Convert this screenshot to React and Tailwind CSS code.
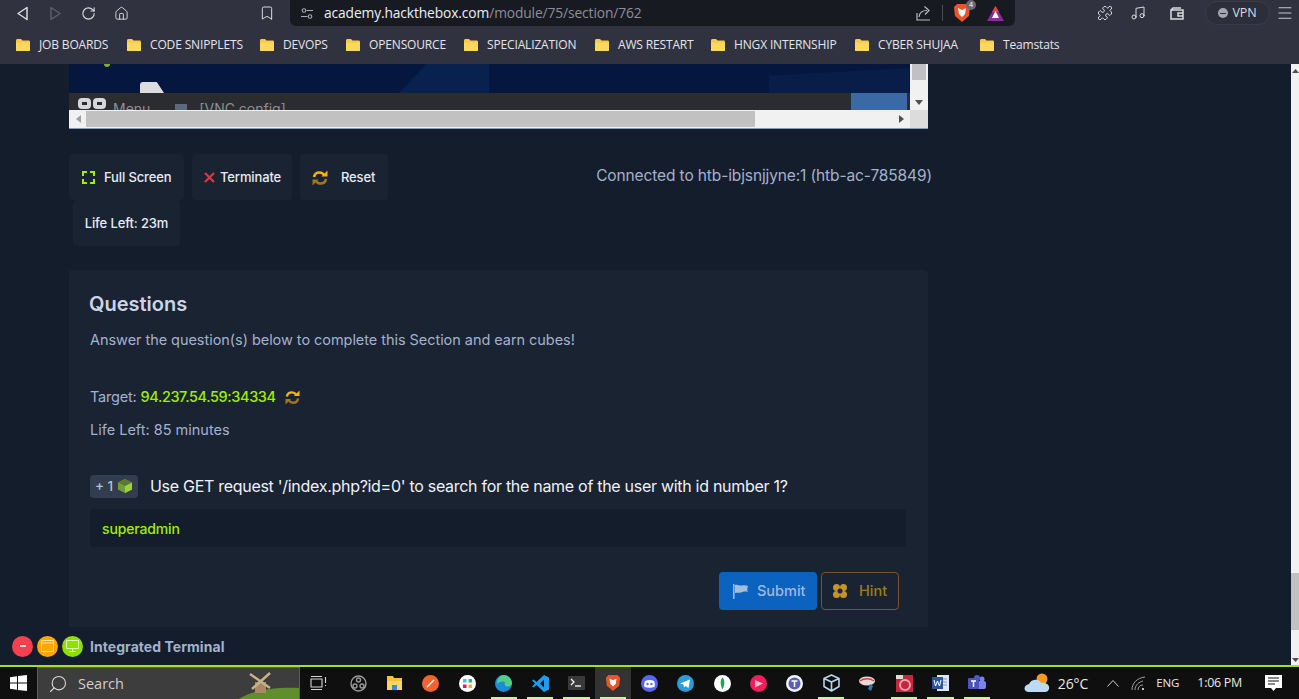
import React from "react";
import { RotateCw, Home, Bookmark, Puzzle, Music, Menu, Search } from "lucide-react";

const ui = "font-['Open_Sans','Noto_Sans',sans-serif]";
const inter = "font-['Inter',sans-serif]";

function Folder() {
  return (
    <svg width="16" height="14" viewBox="0 0 16 14" className="shrink-0">
      <path d="M1 2.5C1 1.7 1.6 1 2.4 1H6l1.5 1.6h6.2c.8 0 1.3.6 1.3 1.3v8c0 .7-.6 1.1-1.3 1.1H2.3C1.6 13 1 12.500 1 11.900z" fill="#f7c945" />
      <path d="M1 4.500h14v7.400c0 .6-.6 1.100-1.300 1.100H2.300C1.600 13 1 12.500 1 11.900z" fill="#fcd85e" />
    </svg>
  );
}

const marks = [
  ["JOB BOARDS", "w-[71px]", "mr-[16px]"],
  ["CODE SNIPPLETS", "w-[93px]", "mr-[16px]"],
  ["DEVOPS", "w-[46px]", "mr-[16px]"],
  ["OPENSOURCE", "w-[78px]", "mr-[16px]"],
  ["SPECIALIZATION", "w-[90px]", "mr-[17px]"],
  ["AWS RESTART", "w-[75px]", "mr-[17px]"],
  ["HNGX INTERNSHIP", "w-[103px]", "mr-[17px]"],
  ["CYBER SHUJAA", "w-[84px]", "mr-[17px]"],
  ["Teamstats", "w-[60px]", ""],
];

function BrowserChrome() {
  return (
    <div className={`${ui} bg-[#30323f] text-[#e4e5ea]`}>
      <div className="h-[26px] flex items-center relative">
        <div className="w-[290px] flex items-center h-full pl-[16px] shrink-0">
          <svg width="13" height="15" viewBox="0 0 13 15" fill="none" stroke="#d9dae0" strokeWidth="1.500"><path d="M11 1.500 2 7.500l9 6z" strokeLinejoin="round" /></svg>
          <svg width="13" height="15" viewBox="0 0 13 15" fill="none" stroke="#5c5e6b" strokeWidth="1.500" className="ml-[20px]"><path d="M2 1.500l9 6-9 6z" strokeLinejoin="round" /></svg>
          <RotateCw size={15} strokeWidth={1.800} color="#d9dae0" className="ml-[19px]" />
          <Home size={15} strokeWidth={1.500} color="#d9dae0" className="ml-[18px]" />
          <Bookmark size={16} strokeWidth={1.500} color="#d9dae0" className="ml-[130px]" />
        </div>
        <div className="w-[725px] h-[26px] bg-[#181a21] rounded-b-[6px] flex items-center pl-[11px] pr-[11px] shrink-0">
          <svg width="12" height="13" viewBox="0 0 12 13" fill="none" stroke="#a9abb5" strokeWidth="1.100"><circle cx="3" cy="3.500" r="1.800" /><path d="M5.500 3.500H12M0 9.500h6.500" /><circle cx="9" cy="9.500" r="1.800" /></svg>
          <span className="ml-[11px] text-[13.800px] leading-none tracking-[-0.120px] text-[#eeeff3]">academy.hackthebox.com</span>
          <span className="text-[13.800px] leading-none tracking-[-0.120px] text-[#8c8e9a]">/module/75/section/762</span>
          <div className="ml-auto flex items-center">
            <svg width="16" height="16" viewBox="0 0 16 16" fill="none" stroke="#b9bbc4" strokeWidth="1.200"><path d="M1 8v7h13M3 12c.5-5 4-6.500 8-6.500M8.500 1.500 13 5.500l-4 4" /></svg>
            <div className="w-px h-[16px] bg-[#4a4c58] ml-[10px]" />
            <div className="relative ml-[10px] mr-[16px]">
              <svg width="18" height="20" viewBox="0 0 18 20"><path d="M4 1h10l3 3-1 9-7 6-7-6-1-9z" fill="#e8552a" /><path d="M5 5l4 2 4-2-1 6-3 3-3-3z" fill="#fff" /></svg>
              <span className="absolute -top-[3px] -right-[5px] w-[10px] h-[10px] rounded-full bg-[#646a7c] text-[7px] leading-[10px] text-center text-white">4</span>
            </div>
            <svg width="17" height="15" viewBox="0 0 17 15"><path d="M8.500 0 17 15H0z" fill="#8a2a9c" /><path d="M8.500 0 12 6H5z" fill="#e8462c" /><path d="M8.500 5 12 12H5z" fill="#fff" /></svg>
          </div>
        </div>
        <div className="flex-1 flex items-center pl-[82px]">
          <Puzzle size={16} strokeWidth={1.500} color="#d9dae0" />
          <Music size={16} strokeWidth={1.500} color="#d9dae0" className="ml-[17px]" />
          <svg width="14" height="13" viewBox="0 0 14 13" fill="none" stroke="#d9dae0" strokeWidth="1.500" className="ml-[24px]"><path d="M1 3h12v9H1zM1 3l2-2h8M8 6h5v3H8z" /></svg>
          <div className="ml-[21px] h-[24px] w-[65px] rounded-full border border-[#3a3c4a] bg-[#2c2e3a] flex items-center justify-center gap-[4px]">
            <span className="w-[10px] h-[10px] rounded-full bg-[#a3a5af] flex items-center justify-center"><span className="w-[6px] h-px bg-[#30323f]" /></span>
            <span className="text-[12.500px] tracking-[-0.100px] text-[#d9dae0]">VPN</span>
          </div>
          <Menu size={18} strokeWidth={1.400} color="#c6c7d0" className="ml-[6px]" />
        </div>
      </div>
      <div className="h-[38px] flex items-center pl-[15px] pb-[1px]">
        {marks.map(([t, w, m]) => (
          <div key={t} className={`flex items-center ${m}`}>
            <Folder />
            <span className={`ml-[8px] text-[12px] tracking-[-0.150px] whitespace-nowrap ${w}`}>{t}</span>
          </div>
        ))}
      </div>
    </div>
  );
}

function Vnc() {
  return (
    <div className="w-[859px] h-[65px] flex flex-col border-b border-[#7f9db9] bg-white shrink-0">
      <div className="flex h-[46px]">
        <div className="flex-1 flex flex-col overflow-hidden">
          <div className="h-[29px] bg-[#05163f] relative overflow-hidden">
            <span className="absolute left-[35px] -top-[3px] w-[6px] h-[6px] rounded-full bg-[#7fb030]" />
            <span className="absolute left-[71px] top-[18px] w-[24px] h-[11px] bg-[#dcdcdc] rounded-tl-[3px] [clip-path:polygon(0_0,70%_0,100%_100%,0_100%)]" />
            <span className="absolute left-[330px] top-0 w-[90px] h-[29px] bg-[#08214f] [clip-path:polygon(30%_0,100%_0,100%_100%,0_100%)]" />
            <span className="absolute left-[700px] top-[4px] w-[140px] h-[25px] bg-[#081d47] [clip-path:polygon(0_30%,100%_0,100%_100%,0_100%)]" />
          </div>
          <div className="h-[17px] bg-[#2a2c30] flex overflow-hidden relative">
            <div className="flex gap-[2px] ml-[9px] mt-[5px]">
              <span className="w-[13px] h-[11px] rounded-[4px] border-[4px] border-[#d5d7dc]" />
              <span className="w-[13px] h-[11px] rounded-[4px] border-[4px] border-[#d5d7dc]" />
            </div>
            <span className={`${inter} ml-[7px] mt-[8px] text-[14px] leading-[16px] text-[#8d8f93]`}>Menu</span>
            <span className="ml-[25px] mt-[11px] w-[12px] h-[9px] bg-[#5a6a7c]" />
            <span className={`${inter} ml-[12px] mt-[8px] text-[14px] leading-[16px] text-[#8d8f93]`}>[VNC config]</span>
            <span className="absolute right-[3px] top-0 w-[56px] h-[17px] bg-[#3a69a6]" />
          </div>
        </div>
        <div className="w-[18px] bg-[#f1f1f1] flex flex-col items-center">
          <div className="w-[14px] h-[16px] bg-[#c1c1c1]" />
          <svg width="8" height="5" viewBox="0 0 8 5" className="mt-[20px]"><path d="M0 0h8L4 5z" fill="#505050" /></svg>
        </div>
      </div>
      <div className="flex-1 flex bg-[#f1f1f1] items-center">
        <svg width="5" height="8" viewBox="0 0 5 8" className="ml-[7px]"><path d="M5 0v8L0 4z" fill="#a0a0a0" /></svg>
        <div className="ml-[5px] w-[669px] h-[16px] bg-[#c1c1c1]" />
        <svg width="5" height="8" viewBox="0 0 5 8" className="ml-[144px]"><path d="M0 0v8l5-4z" fill="#505050" /></svg>
        <div className="ml-auto w-[18px] h-full bg-[#dcdcdc]" />
      </div>
    </div>
  );
}

function Swap({ size = 16 }) {
  return (
    <svg width={size} height={size} viewBox="0 0 16 16" fill="none" strokeWidth="2.600">
      <path d="M2 7c.5-3 3-4.500 5.500-4.500 2 0 3.500 1 4.500 2.500" stroke="#f7b500" />
      <path d="M9.500 6.500h6V.5z" fill="#f7b500" />
      <path d="M14 9c-.5 3-3 4.500-5.500 4.500-2 0-3.500-1-4.500-2.500" stroke="#a07620" />
      <path d="M6.500 9.500H.5v6z" fill="#a07620" />
    </svg>
  );
}

function Btn({ className, children }) {
  return <div className={`h-[46px] bg-[#1a2332] rounded-[4px] flex items-center pt-[1px] text-[13px] font-medium tracking-[-0.130px] text-[#e8ebf2] ${className}`}>{children}</div>;
}

function Controls() {
  return (
    <div className={`${inter} w-[863px] mt-[25px]`}>
      <div className="flex items-center">
        <Btn className="w-[115px] pl-[13px]">
          <svg width="13" height="13" viewBox="0 0 13 13" fill="none" stroke="#9fef00" strokeWidth="2"><path d="M1 5V1h4M8 1h4v4M12 8v4H8M5 12H1V8" /></svg>
          <span className="ml-[9px]">Full Screen</span>
        </Btn>
        <Btn className="w-[100px] ml-[8px] pl-[12px]">
          <svg width="11" height="11" viewBox="0 0 11 11" stroke="#e0353f" strokeWidth="2.200"><path d="M1 1l9 9M10 1l-9 9" /></svg>
          <span className="ml-[5px]">Terminate</span>
        </Btn>
        <Btn className="w-[88px] ml-[8px] pl-[12px]">
          <Swap />
          <span className="ml-[13px]">Reset</span>
        </Btn>
        <span className="ml-auto text-[15.500px] text-[#a4b1cd] mb-[3px] tracking-[-0.120px]">Connected to htb-ibjsnjjyne:1 (htb-ac-785849)</span>
      </div>
      <Btn className="w-[107px] ml-[4px] justify-center">Life Left: 23m</Btn>
    </div>
  );
}

function Card() {
  return (
    <div className={`${inter} w-[859px] mt-[24px] bg-[#1a2332] pt-[22px] pl-[21px] pr-[22px] rounded-t-[4px] h-[400px] shrink-0`}>
      <h2 className="text-[20px] leading-[24px] font-semibold -ml-[1px] text-[#cdd5e4]">Questions</h2>
      <p className="mt-[13px] text-[14.500px] leading-[22px] tracking-[-0.050px] text-[#a4b1cd]">Answer the question(s) below to complete this Section and earn cubes!</p>
      <div className="mt-[35px] flex items-center text-[14.500px] leading-[22px] text-[#a4b1cd]">
        <span className="tracking-[-0.200px]">Target:</span>
        <span className="ml-[4px] font-medium tracking-[-0.400px] text-[#9fef00]">94.237.54.59:34334</span>
        <span className="ml-[9px]"><Swap size={15} /></span>
      </div>
      <p className="mt-[11px] text-[14.500px] leading-[22px] text-[#a4b1cd]">Life Left: 85 minutes</p>
      <div className="mt-[33px] flex items-center">
        <div className="w-[48px] h-[23px] rounded-[4px] bg-[#323e50] flex items-center pl-[5px] text-[13.500px] font-medium text-[#b8c2d4]">
          <span>+ 1</span>
          <svg width="16" height="16" viewBox="0 0 16 16" className="ml-[4px]"><path d="M8 1l7 3.500v7L8 15l-7-3.500v-7z" fill="#6f9d3a" /><path d="M8 8l7-3.500v7L8 15z" fill="#9fd13a" /><path d="M1 4.500 8 1l7 3.500L8 8z" fill="#587a35" /></svg>
        </div>
        <span className="ml-[12px] text-[16px] leading-[24px] tracking-[-0.290px] text-[#eef1f6]">Use GET request '/index.php?id=0' to search for the name of the user with id number 1?</span>
      </div>
      <div className="mt-[11px] h-[38px] rounded-[4px] bg-[#141d2b] flex items-center pl-[12px] text-[14px] font-medium tracking-[-0.150px] text-[#9fef00]">superadmin</div>
      <div className="mt-[25px] flex justify-end pr-[7px] gap-[4px]">
        <div className="w-[98px] h-[38px] rounded-[4px] bg-[#0b63bf] flex items-center pl-[13px] text-[14.500px] font-medium text-[#9fb8dc]">
          <svg width="17" height="15" viewBox="0 0 17 15"><path d="M1 0h1.500v15H1z" fill="#a5bddc" /><path d="M3 1c3-1 4 1 7 .500 2-.3 4-.5 6 .5-1 3-1 4 0 6-3-1-5 0-7 .500-2 .3-4 0-6 .500z" fill="#a5bddc" /></svg>
          <span className="ml-[8px]">Submit</span>
        </div>
        <div className="w-[78px] h-[38px] rounded-[4px] border border-[#6e5a28] flex items-center pl-[11px] text-[14.500px] font-medium text-[#a07a1e]">
          <svg width="14" height="14" viewBox="0 0 14 14"><circle cx="3.500" cy="3.500" r="3.500" fill="#c3962a" /><circle cx="10.500" cy="3.500" r="3.500" fill="#c3962a" /><circle cx="3.500" cy="10.500" r="3.500" fill="#c3962a" /><circle cx="10.500" cy="10.500" r="3.500" fill="#c3962a" /><circle cx="7" cy="7" r="2.500" fill="#2b2142" /></svg>
          <span className="ml-[12px]">Hint</span>
        </div>
      </div>
    </div>
  );
}

function Terminal() {
  return (
    <div className={`${inter} h-[38px] bg-[#141d2b] flex items-center pl-[12px] shrink-0`}>
      <span className="w-[21px] h-[21px] rounded-full bg-[#f5414f] flex items-center justify-center"><span className="w-[6px] h-[2px] bg-[#ffd8dc]" /></span>
      <span className="ml-[4px] w-[21px] h-[21px] rounded-full bg-[#ffa600] flex items-center justify-center">
        <svg width="13" height="12" viewBox="0 0 13 12" fill="none" stroke="#ffe2a0" strokeWidth="1"><path d="M.5.500h12v11H.5zM.500 3h12" /></svg>
      </span>
      <span className="ml-[4px] w-[21px] h-[21px] rounded-full bg-[#8fe000] flex items-center justify-center">
        <svg width="13" height="12" viewBox="0 0 13 12" fill="none" stroke="#e3f8b8" strokeWidth="1"><path d="M.5.500h12v8H.5zM6.500 8.500v3M3.500 11.500h6" /></svg>
      </span>
      <span className="ml-[7px] text-[14px] font-bold text-[#a4b1cd] tracking-[0.050px]">Integrated Terminal</span>
    </div>
  );
}

const dot = (bg, inner) => (
  <svg width="17" height="17" viewBox="0 0 17 17"><circle cx="8.500" cy="8.500" r="8.500" fill={bg} />{inner}</svg>
);

const icons = [
  [<svg width="17" height="17" viewBox="0 0 17 17" fill="none" stroke="#9a9a9a" strokeWidth="1.400"><circle cx="8.500" cy="8.500" r="7.500" /><circle cx="8.500" cy="5" r="2" /><circle cx="5" cy="11" r="2" /><circle cx="12" cy="11" r="2" /></svg>, 0],
  [<svg width="17" height="16" viewBox="0 0 17 16"><path d="M1 1h6l1 2h8v4H1z" fill="#f5c33b" /><path d="M1 6h15v9H1z" fill="#fbd85d" /><path d="M6 10h5v5H6z" fill="#2f8fdc" /></svg>, 0],
  [dot("#f4622d", <path d="M5 12 12 5" stroke="#fff" strokeWidth="1.500" />), 0],
  [dot("#ffffff", <><rect x="4" y="4" width="3.500" height="3.500" fill="#36c5f0" /><rect x="9.500" y="4" width="3.500" height="3.500" fill="#2eb67d" /><rect x="4" y="9.500" width="3.500" height="3.500" fill="#e01e5a" /><rect x="9.500" y="9.500" width="3.500" height="3.500" fill="#ecb22e" /></>), 0],
  [<svg width="17" height="17" viewBox="0 0 17 17"><circle cx="8.500" cy="8.500" r="8.500" fill="#1a8cd8" /><path d="M8.500 0C13 0 17 3.500 17 8.500c0 2-2 3-4 3-3 0-4-2-3-4C9 6 5 6 2 9 2 4 5 0 8.500 0z" fill="#4fd08a" /></svg>, 1],
  [<svg width="17" height="17" viewBox="0 0 17 17"><path d="M12 0l5 2.500v12L12 17 4.500 10 1.500 12.500 0 11.500 3 8.500 0 5.500l1.500-1 3 2.500zM12 4.500 8 8.500l4 4z" fill="#1f9cf0" /></svg>, 1],
  [<svg width="17" height="14" viewBox="0 0 17 14"><rect width="17" height="14" rx="1" fill="#3a3a3a" /><path d="M3 3l3 3-3 3" stroke="#fff" strokeWidth="1.300" fill="none" /><path d="M7 10h6" stroke="#fff" strokeWidth="1.300" /></svg>, 1],
  [<svg width="16" height="18" viewBox="0 0 18 20"><path d="M4 1h10l3 3-1 9-7 6-7-6-1-9z" fill="#e8552a" /><path d="M5 5l4 2 4-2-1 6-3 3-3-3z" fill="#fff" /></svg>, 2],
  [dot("#5865f2", <><path d="M4 6c3-1.500 6-1.500 9 0 1 2 1 4 .5 6-3 1-7 1-10 0-.5-2-.5-4 .5-6z" fill="#fff" /><circle cx="6.500" cy="9" r="1.200" fill="#5865f2" /><circle cx="10.500" cy="9" r="1.200" fill="#5865f2" /></>), 0],
  [dot("#2a9ed6", <path d="M3 8.500 13 4.500l-1.500 8.500-3-2-1.500 1.500-.5-3z" fill="#fff" />), 0],
  [dot("#ffffff", <path d="M8.500 2.500c2.500 2.500 2.500 7 0 12-2.500-5-2.500-9.500 0-12z" fill="#13aa52" />), 0],
  [dot("#ee1f5c", <path d="M5 5l8 3.500L5 12.500z" fill="#fbc" />), 0],
  [dot("#f2f2fa", <><circle cx="8.500" cy="8.500" r="6" fill="#5a5fb8" /><path d="M5.500 6h6M8.500 6v6" stroke="#fff" strokeWidth="1.500" /></>), 0],
  [<svg width="17" height="18" viewBox="0 0 17 18" fill="none" stroke="#b7d4ee" strokeWidth="1.600" strokeLinejoin="round"><path d="M8.500 1 16 4.500v8L8.500 17 1 12.500v-8zM1 4.500 8.500 8 16 4.500M8.500 8v9" /></svg>, 1],
  [<svg width="18" height="17" viewBox="0 0 18 17"><ellipse cx="8" cy="6" rx="8" ry="4.500" fill="#e8d7d7" /><path d="M1 6c4-3 10-3 14 0" stroke="#c8434a" strokeWidth="1.500" fill="none" /><path d="M11 9l3 2-2 5-3-2z" fill="#2a7ab8" /></svg>, 0],
  [<svg width="17" height="17" viewBox="0 0 17 17"><rect width="17" height="17" fill="#c4263d" /><rect width="7" height="4" fill="#ddd" /><circle cx="9" cy="10" r="5" fill="none" stroke="#f5a5b0" strokeWidth="2" /></svg>, 1],
  [<svg width="17" height="16" viewBox="0 0 17 16"><rect x="5" width="12" height="16" fill="#dfe6f5" /><path d="M9 4h6M9 7h6M9 10h6" stroke="#7c96c8" /><rect width="11" height="12" y="2" fill="#2b579a" /><path d="M2 5l1.500 6L5.500 6l2 5L9 5" stroke="#fff" fill="none" strokeWidth="1" /></svg>, 1],
  [<svg width="18" height="16" viewBox="0 0 18 16"><circle cx="14" cy="4" r="2.500" fill="#7b83eb" /><rect x="9" y="6" width="9" height="8" rx="2" fill="#7b83eb" /><circle cx="9" cy="3" r="3" fill="#5059c9" /><rect y="3" width="11" height="11" rx="1" fill="#4b53bc" /><path d="M3 6h5M5.500 6v6" stroke="#fff" strokeWidth="1.400" /></svg>, 1],
];

function Taskbar() {
  return (
    <div className={`${ui} h-[32px] bg-[#0f0f0f] flex items-center shrink-0 text-[#e8e8e8] overflow-hidden`}>
      <div className="w-[37px] flex justify-center shrink-0">
        <svg width="17" height="16" viewBox="0 0 17 16" fill="#fff"><path d="M0 2.300 7 1.300V7.500H0zM8 1.100 17 0v7.500H8zM0 8.500h7v6.200L0 13.700zM8 8.500h9V16L8 14.900z" /></svg>
      </div>
      <div className="relative w-[263px] h-[32px] bg-[#3d3d3d] border-x border-t border-[#5c5c5c] flex items-center pl-[10px] overflow-hidden shrink-0">
        <Search size={20} strokeWidth={1.300} color="#dcdcdc" className="-scale-x-100" />
        <span className="ml-[10px] text-[14.500px] text-[#cfcfcf]">Search</span>
        <svg width="62" height="32" viewBox="0 0 62 32" className="absolute right-0 top-0">
          <path d="M0 32C12 24 30 19 62 20V32z" fill="#5f8f2c" />
          <rect x="18" y="14" width="11" height="11" fill="#a58a68" />
          <path d="M13 6 33 20M33 5 15 21" stroke="#c7b08a" strokeWidth="2.500" />
        </svg>
      </div>
      <div className="w-[36px] flex justify-center shrink-0">
        <svg width="17" height="14" viewBox="0 0 17 14" fill="none" stroke="#d8d8d8" strokeWidth="1.100"><path d="M1 3h11v8H1zM1 .5h11M1 13.500h11M15.500 1v6M15.500 9v1" /></svg>
      </div>
      <div className="flex ml-[4px]">
        {icons.map(([icon, state], i) => (
          <div key={i} className={`w-[36.400px] h-[32px] flex items-center justify-center relative ${state === 2 ? "bg-[#333333]" : ""}`}>
            {icon}
            {state > 0 && <span className="absolute bottom-0 left-[5px] right-[5px] h-[2px] bg-[#cdf0a0]" />}
          </div>
        ))}
      </div>
      <div className="ml-auto flex items-center pr-[17px]">
        <svg width="26" height="20" viewBox="0 0 26 20"><circle cx="18" cy="6" r="5.500" fill="#f59a23" /><path d="M5 19c-6 0-6-7 0-8 2-5 10-6 12-1 6-1 9 3 8 6-.5 2-2 3-4 3z" fill="#bcd9f5" /></svg>
        <span className="ml-[8px] text-[14px] tracking-[-0.100px]">26°C</span>
        <svg width="12" height="7" viewBox="0 0 12 7" fill="none" stroke="#d0d0d0" strokeWidth="1" className="ml-[19px]"><path d="M.5 6.500l5.500-6 5.500 6" /></svg>
        <svg width="15" height="15" viewBox="0 0 15 15" fill="none" stroke="#a0a0a0" strokeWidth="1" className="ml-[12px]"><path d="M1 14C1 7 6 2 14 1M4 14c0-5 4-8 8-9M7 14c0-3 2-5 5-5" /><circle cx="12" cy="13" r="1" fill="#fff" stroke="none" /></svg>
        <span className="ml-[10px] text-[11.500px] tracking-[-0.100px]">ENG</span>
        <span className="ml-[18px] text-[12.500px] tracking-[-0.300px]">1:06 PM</span>
        <svg width="17" height="17" viewBox="0 0 17 17" className="ml-[23px]"><path d="M0 0h17v13h-6l-2.500 3L6 13H0z" fill="#fff" /><path d="M3 3h11M3 6h11M3 9h7" stroke="#111" /></svg>
      </div>
    </div>
  );
}

export default function App() {
  return (
    <div className="w-[1299px] h-[699px] overflow-hidden flex flex-col bg-[#141d2b]">
      <BrowserChrome />
      <div className="flex h-[601px] shrink-0">
        <div className="flex-1 flex flex-col min-w-0">
          <div className="flex-1 overflow-hidden pl-[69px] min-h-0">
            <Vnc />
            <Controls />
            <Card />
          </div>
          <Terminal />
        </div>
        <div className="w-[8px] bg-[#f1f1f1] flex flex-col items-center">
          <svg width="7" height="4" viewBox="0 0 7 4" className="mt-[5px]"><path d="M3.500 0 7 4H0z" fill="#505050" /></svg>
          <div className="mt-[500px] w-full h-[57px] bg-[#c1c1c1]" />
          <svg width="7" height="4" viewBox="0 0 7 4" className="mt-[28px]"><path d="M0 0h7L3.500 4z" fill="#505050" /></svg>
        </div>
      </div>
      <div className="h-[2px] bg-[#9fe02f] shrink-0" />
      <Taskbar />
    </div>
  );
}
